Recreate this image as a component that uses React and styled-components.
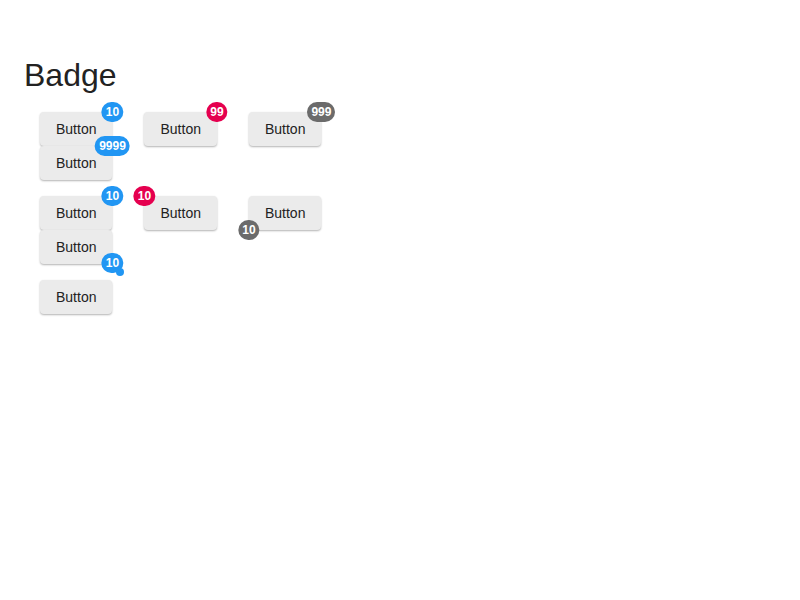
import React from "react";
import styled, { createGlobalStyle, css } from "styled-components";

const Global = createGlobalStyle`
  html, body { margin: 0; padding: 0; background: #fff; }
  body { font-family: "Liberation Sans", Arial, sans-serif; color: #222; }
`;

const Page = styled.div`
  padding: 56px 24px 24px;
`;

const Title = styled.h1`
  margin: 0 0 18px;
  font-size: 32px;
  line-height: 1.2;
  font-weight: 400;
  color: #222;
`;

const Rows = styled.div`
  display: flex;
  flex-direction: column;
  gap: 16px;
  padding-left: 16px;
`;

const Row = styled.div`
  display: flex;
  align-items: flex-start;
  gap: 32px;
`;

const Stack = styled.div`
  display: flex;
  flex-direction: column;
`;

const Wrap = styled.div`
  position: relative;
  display: inline-flex;
`;

const Button = styled.button`
  height: 34px;
  padding: 0 16px;
  border: none;
  border-radius: 4px;
  background: #ebebeb;
  box-shadow: 0 1px 2px rgba(0, 0, 0, 0.3);
  font-family: "Liberation Sans", Arial, sans-serif;
  font-size: 14px;
  color: #222;
  cursor: pointer;
`;

const colors = { primary: "#2196f3", error: "#e5004f", grey: "#6b6b6b" };

const positions = {
  tr: css`top: -10px; left: 100%;`,
  tl: css`top: -10px; left: 0;`,
  br: css`top: calc(100% - 11px); left: 100%;`,
  bl: css`top: calc(100% - 10px); left: 0;`,
};

const Badge = styled.span`
  position: absolute;
  z-index: 2;
  ${(p) => positions[p.$pos]}
  transform: translateX(-50%);
  height: 20px;
  min-width: 20px;
  box-sizing: border-box;
  padding: 0 4px;
  border-radius: 10px;
  background: ${(p) => colors[p.$color]};
  color: #fff;
  font-size: 12px;
  font-weight: 700;
  line-height: 20px;
  text-align: center;
  white-space: nowrap;
`;

const Dot = styled.span`
  position: absolute;
  z-index: 3;
  left: calc(100% + 4px);
  top: calc(100% + 4px);
  width: 8px;
  height: 8px;
  border-radius: 50%;
  background: ${(p) => colors[p.$color]};
`;

const Badged = ({ value, color = "primary", pos = "tr", dot }) => (
  <Wrap>
    <Button>Button</Button>
    {value !== undefined && (
      <Badge $color={color} $pos={pos}>
        {value}
      </Badge>
    )}
    {dot && <Dot $color={color} />}
  </Wrap>
);

export default function App() {
  return (
    <>
      <Global />
      <Page>
        <Title>Badge</Title>
        <Rows>
          <Row>
            <Stack>
              <Badged value="10" />
              <Badged value="9999" />
            </Stack>
            <Badged value="99" color="error" />
            <Badged value="999" color="grey" />
          </Row>
          <Row>
            <Stack>
              <Badged value="10" />
              <Badged value="10" pos="br" dot />
            </Stack>
            <Badged value="10" color="error" pos="tl" />
            <Badged value="10" color="grey" pos="bl" />
          </Row>
          <Row>
            <Badged />
          </Row>
        </Rows>
      </Page>
    </>
  );
}
